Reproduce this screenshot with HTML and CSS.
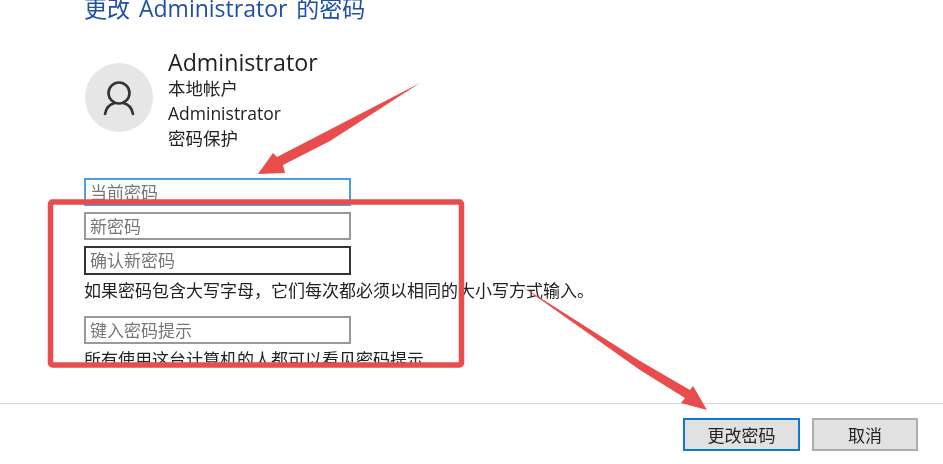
FILE: index.html
```html
<!DOCTYPE html>
<html lang="zh-CN">
<head>
    <meta charset="UTF-8">
    <title>更改 Administrator 的密码</title>
    <link rel="stylesheet" href="styles.css">
</head>
<body>

<div class="page">
    <div class="content">
        <h1 class="title">更改 Administrator 的密码</h1>

        <div class="user">
            <div class="avatar">
                <svg width="32" height="36" viewBox="0 0 32 36" fill="none" stroke="#333" stroke-width="2.6" stroke-linecap="round">
                    <circle cx="16" cy="13" r="10.5"/>
                    <path d="M2 34C3 28 7 24 12 23M30 34C29 28 25 24 20 23"/>
                </svg>
            </div>
            <div class="user-info">
                <div class="user-name">Administrator</div>
                <div class="user-line">本地帐户</div>
                <div class="user-line">Administrator</div>
                <div class="user-line">密码保护</div>
            </div>
        </div>

        <div class="field field-focus">当前密码</div>
        <div class="field">新密码</div>
        <div class="field field-dark">确认新密码</div>
        <p class="note">如果密码包含大写字母，它们每次都必须以相同的大小写方式输入。</p>
        <div class="field field-hint">键入密码提示</div>
        <p class="note note-cut">所有使用这台计算机的人都可以看见密码提示</p>
    </div>

    <div class="footer">
        <button class="btn btn-primary">更改密码</button>
        <button class="btn">取消</button>
    </div>
</div>

<!-- 截图上的红色标注 -->
<svg class="marks" width="943" height="464" viewBox="0 0 943 464">
    <rect x="50.5" y="202" width="411" height="163" rx="2" fill="none" stroke="#e84c4c" stroke-width="5.5"/>
    <path fill="#e84c4c" d="M420 83 277 157 273 153 258 174 285 173 283 165 330 141Z"/>
    <path fill="#e84c4c" d="M520 285 640 361 690 390 693 386 707 410 681 403 685 398 640 370Z"/>
</svg>

</body>
</html>
```

FILE: styles.css
```css
* {
    margin: 0;
    padding: 0;
    box-sizing: border-box;
}

html, body {
    height: 100%;
    overflow: hidden;
    background: #fff;
}

body {
    font-family: 'Open Sans', 'Noto Sans CJK SC', sans-serif;
    color: #222;
    position: relative;
}

.page {
    display: flex;
    flex-direction: column;
    height: 464px;
    filter: blur(0.6px);
}

.content {
    height: 403px;
    overflow: hidden;
    padding-left: 84px;
    flex-shrink: 0;
}

.title {
    font-size: 23px;
    font-weight: 400;
    line-height: 16px;
    word-spacing: 3px;
    color: #1f4fa6;
}

.user {
    display: flex;
    gap: 15px;
    margin-top: 32px;
    margin-bottom: 27px;
}

.avatar {
    width: 68px;
    height: 69px;
    margin-top: 15px;
    margin-left: 1px;
    border-radius: 50%;
    background: #e6e6e6;
    display: flex;
    align-items: center;
    justify-content: center;
}

.user-name {
    font-size: 23.2px;
    line-height: 28px;
    color: #222;
}

.user-line {
    font-size: 17.5px;
    line-height: 25px;
}

.field {
    width: 267px;
    height: 28px;
    margin-bottom: 6px;
    padding-left: 4px;
    border: 2px solid #999;
    font-size: 17px;
    line-height: 25px;
    color: #777;
}

.field-focus {
    border-color: #4a9fdc;
}

.field-dark {
    border-color: #333;
    height: 29px;
    margin-bottom: 3px;
}

.field-hint {
    margin-top: 12px;
    margin-bottom: 0;
}

.note {
    font-size: 17px;
    line-height: 26px;
    white-space: nowrap;
}

.note-cut {
    height: 21px;
    overflow: hidden;
    line-height: 32px;
}

.footer {
    flex: 1;
    border-top: 1px solid #d8d8d8;
    display: flex;
    justify-content: flex-end;
    align-items: flex-start;
    gap: 12px;
    padding: 14px 25px 0 0;
}

.btn {
    width: 106px;
    height: 33px;
    background: #e1e1e1;
    border: 2px solid #adadad;
    font-family: inherit;
    font-size: 17px;
    color: #222;
}

.btn-primary {
    width: 117px;
    border-color: #0a78d4;
}

/* 标注盖在页面上 */
.marks {
    position: absolute;
    left: 0;
    top: 0;
}
```
